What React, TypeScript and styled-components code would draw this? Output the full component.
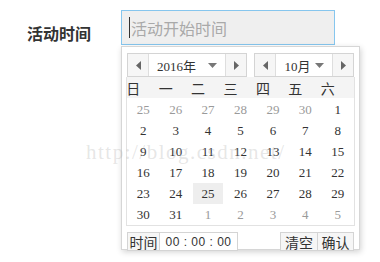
import styled, { createGlobalStyle } from 'styled-components'

const GlobalStyle = createGlobalStyle`
  html, body {
    margin: 0;
    padding: 0;
    background: #ffffff;
  }
  body {
    width: 380px;
    height: 262px;
    overflow: hidden;
    font-family: "Liberation Sans", "Noto Sans CJK SC", sans-serif;
    color: #333333;
  }
`

const Page = styled.div`
  position: relative;
  width: 380px;
  height: 262px;
  overflow: hidden;
`

const Row = styled.div`
  display: flex;
  align-items: flex-start;
  padding: 10px 0 0 27px;
`

const Label = styled.div`
  width: 94px;
  margin-top: 6px;
  line-height: 35px;
  font-size: 16px;
  font-weight: 700;
  color: #333;
  font-family: "Noto Sans CJK SC", sans-serif;
`

const Field = styled.div`
  position: relative;
`

const Input = styled.div`
  box-sizing: border-box;
  width: 214px;
  height: 35px;
  border: 1px solid #86c6ee;
  background: #efefef;
  display: flex;
  align-items: center;
  padding-left: 7px;
  font-size: 16px;
  color: #a9a9a9;
  font-family: "Noto Sans CJK SC", sans-serif;
`

const Caret = styled.span`
  display: inline-block;
  width: 1px;
  height: 21px;
  background: #333;
  margin-right: 1px;
`

const Popup = styled.div`
  position: absolute;
  left: 0;
  top: 36px;
  box-sizing: border-box;
  width: 239px;
  height: 204px;
  background: #fff;
  border: 1px solid #d6d6d6;
  box-shadow: 1px 2px 6px rgba(0, 0, 0, 0.18);
  padding: 6px 5px 0 5px;
`

const Nav = styled.div`
  display: flex;
  gap: 7px;
`

const NavBox = styled.div<{ $w: number }>`
  box-sizing: border-box;
  width: ${({ $w }) => $w}px;
  height: 24px;
  border: 1px solid #d4d4d4;
  display: flex;
  background: #fff;
`

const ArrowCell = styled.div<{ $side: 'left' | 'right' }>`
  width: 20px;
  flex: none;
  background: #f6f6f6;
  display: flex;
  align-items: center;
  justify-content: center;
  ${({ $side }) => ($side === 'left' ? 'border-right: 1px solid #dedede;' : 'border-left: 1px solid #dedede;')}
`

const NavLabel = styled.div<{ $gap: number }>`
  flex: 1;
  display: flex;
  align-items: center;
  justify-content: center;
  gap: ${({ $gap }) => $gap}px;
  font-size: 13px;
  color: #333;
  font-family: "Liberation Serif", "Noto Sans CJK SC", serif;
`

const Grid = styled.div`
  box-sizing: border-box;
  width: 229px;
  margin-left: -1px;
  border: 1px solid #e2e2e2;
  border-top: none;
  overflow: hidden;
`

const WeekRow = styled.div`
  display: grid;
  grid-template-columns: repeat(7, minmax(0, 1fr));
  height: 21px;
  background: #f4f4f4;
`

const WeekCell = styled.div`
  display: flex;
  align-items: center;
  justify-content: center;
  padding-right: 20px;
  white-space: nowrap;
  font-size: 14px;
  color: #333;
  font-family: "Noto Sans CJK SC", sans-serif;
`

const Days = styled.div`
  display: grid;
  grid-template-columns: repeat(7, minmax(0, 1fr));
  grid-auto-rows: 21px;
  padding-top: 1px;
`

const Day = styled.div<{ $muted?: boolean; $today?: boolean }>`
  display: flex;
  align-items: center;
  justify-content: center;
  font-size: 13px;
  font-family: "Liberation Serif", serif;
  color: ${({ $muted }) => ($muted ? '#9a9a9a' : '#333')};
  background: ${({ $today }) => ($today ? '#eeeeee' : 'transparent')};
  margin: 0 1px;
`

const Footer = styled.div`
  display: flex;
  margin-top: 6px;
  height: 19px;
`

const Box = styled.div<{ $w: number; $bg?: string }>`
  box-sizing: border-box;
  width: ${({ $w }) => $w}px;
  height: 19px;
  border: 1px solid #d4d4d4;
  background: ${({ $bg }) => $bg || '#fff'};
  display: flex;
  align-items: center;
  justify-content: center;
  font-size: 14px;
  color: #333;
  font-family: "Noto Sans CJK SC", sans-serif;
  & + & {
    border-left: none;
  }
`

const TimeText = styled.span`
  font-size: 12px;
  font-family: "Liberation Sans", sans-serif;
  letter-spacing: 0.5px;
`

const Spacer = styled.div`
  flex: 1;
`

const Watermark = styled.div`
  position: absolute;
  left: 86px;
  top: 140px;
  font-family: "Liberation Serif", serif;
  font-size: 21px;
  letter-spacing: 1.5px;
  color: rgba(170, 170, 170, 0.3);
  pointer-events: none;
  white-space: nowrap;
`

function Triangle({ dir }: { dir: 'left' | 'right' | 'down' }) {
  if (dir === 'down') {
    return (
      <svg width="9" height="5" viewBox="0 0 9 5">
        <path d="M0 0 L9 0 L4.5 5 Z" fill="#777" />
      </svg>
    )
  }
  return (
    <svg width="5" height="9" viewBox="0 0 5 9">
      <path d={dir === 'left' ? 'M5 0 L5 9 L0 4.5 Z' : 'M0 0 L0 9 L5 4.5 Z'} fill="#666" />
    </svg>
  )
}

const weeks = ['日', '一', '二', '三', '四', '五', '六']

const days: { d: number; muted?: boolean; today?: boolean }[] = [
  ...[25, 26, 27, 28, 29, 30].map((d) => ({ d, muted: true })),
  ...Array.from({ length: 31 }, (_, i) => ({ d: i + 1, today: i + 1 === 25 })),
  ...[1, 2, 3, 4, 5].map((d) => ({ d, muted: true })),
]

export default function App() {
  return (
    <Page>
      <GlobalStyle />
      <Row>
        <Label>活动时间</Label>
        <Field>
          <Input>
            <Caret />
            活动开始时间
          </Input>
          <Popup>
            <Nav>
              <NavBox $w={120}>
                <ArrowCell $side="left">
                  <Triangle dir="left" />
                </ArrowCell>
                <NavLabel $gap={12}>
                  <span>2016年</span>
                  <Triangle dir="down" />
                </NavLabel>
                <ArrowCell $side="right">
                  <Triangle dir="right" />
                </ArrowCell>
              </NavBox>
              <NavBox $w={100}>
                <ArrowCell $side="left">
                  <Triangle dir="left" />
                </ArrowCell>
                <NavLabel $gap={4}>
                  <span>10月</span>
                  <Triangle dir="down" />
                </NavLabel>
                <ArrowCell $side="right">
                  <Triangle dir="right" />
                </ArrowCell>
              </NavBox>
            </Nav>
            <Grid>
              <WeekRow>
                {weeks.map((w) => (
                  <WeekCell key={w}>{w}</WeekCell>
                ))}
              </WeekRow>
              <Days>
                {days.map((item, i) => (
                  <Day key={i} $muted={item.muted} $today={item.today}>
                    {item.d}
                  </Day>
                ))}
              </Days>
            </Grid>
            <Footer>
              <Box $w={33} $bg="#f6f6f6">时间</Box>
              <Box $w={78}>
                <TimeText>00 : 00 : 00</TimeText>
              </Box>
              <Spacer />
              <Box $w={38} $bg="#f6f6f6">清空</Box>
              <Box $w={36} $bg="#f6f6f6">确认</Box>
            </Footer>
          </Popup>
        </Field>
      </Row>
      <Watermark>http://blog.csdn.net/</Watermark>
    </Page>
  )
}
